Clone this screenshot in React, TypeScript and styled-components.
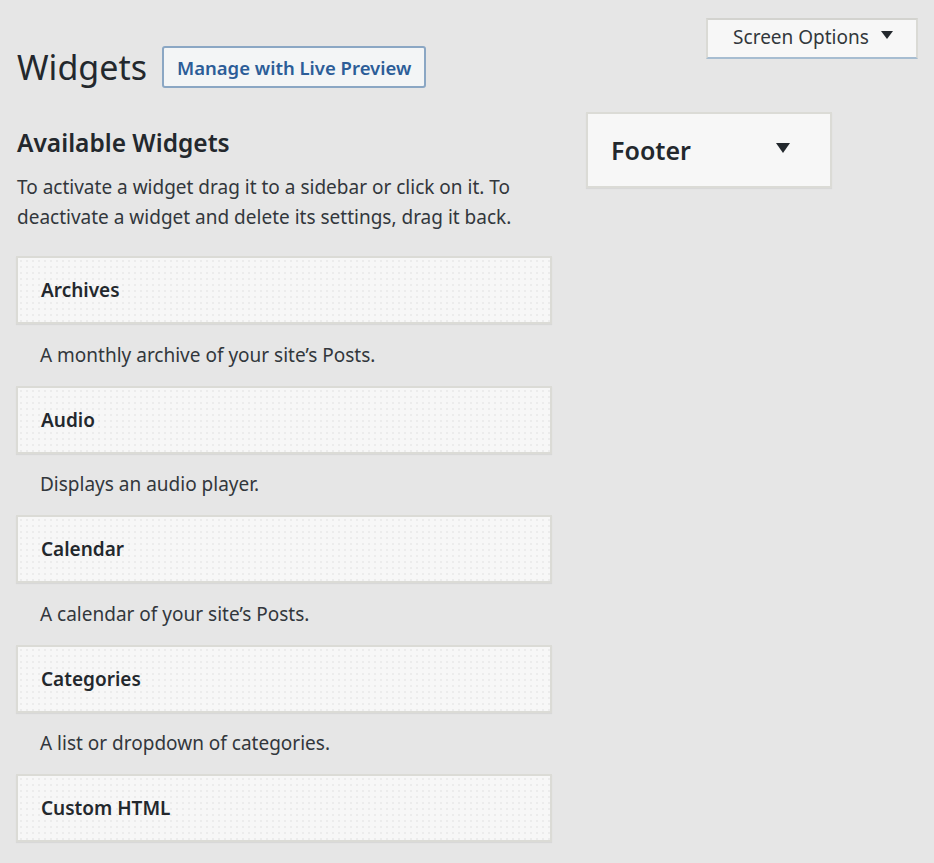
import React from "react";
import styled, { createGlobalStyle } from "styled-components";

const widgets = [
  { title: "Archives", description: "A monthly archive of your site’s Posts." },
  { title: "Audio", description: "Displays an audio player." },
  { title: "Calendar", description: "A calendar of your site’s Posts." },
  { title: "Categories", description: "A list or dropdown of categories." },
  { title: "Custom HTML", description: "" },
];

export default function App() {
  return (
    <>
      <GlobalStyle />
      <S.Page>
        <S.HeaderRow>
          <S.TitleGroup>
            <S.Title>Widgets</S.Title>
            <S.ManageButton>Manage with Live Preview</S.ManageButton>
          </S.TitleGroup>
          <S.ScreenOptions>
            Screen Options <S.Caret $size={6} />
          </S.ScreenOptions>
        </S.HeaderRow>

        <S.Columns>
          <S.LeftColumn>
            <S.SectionTitle>Available Widgets</S.SectionTitle>
            <S.Intro>
              To activate a widget drag it to a sidebar or click on it. To
              deactivate a widget and delete its settings, drag it back.
            </S.Intro>
            <S.WidgetList>
              {widgets.map((w) => (
                <li key={w.title}>
                  <S.WidgetCard>{w.title}</S.WidgetCard>
                  {w.description && <S.WidgetDesc>{w.description}</S.WidgetDesc>}
                </li>
              ))}
            </S.WidgetList>
          </S.LeftColumn>

          <S.SidebarBox>
            Footer
            <S.Caret $size={7} />
          </S.SidebarBox>
        </S.Columns>
      </S.Page>
    </>
  );
}

const GlobalStyle = createGlobalStyle`
  html, body {
    margin: 0;
    padding: 0;
    background: #e6e6e6;
    font-family: "Noto Sans", "Open Sans", sans-serif;
    color: #23282d;
  }
  * { box-sizing: border-box; }
`;

const S = {
  Page: styled.div`
    padding: 18px 16px 0 17px;
    min-height: 863px;
  `,
  HeaderRow: styled.div`
    display: flex;
    justify-content: space-between;
    align-items: flex-start;
  `,
  TitleGroup: styled.div`
    display: flex;
    align-items: center;
    gap: 15px;
    margin-top: 28px;
  `,
  Title: styled.h1`
    margin: 0;
    font-size: 34px;
    font-weight: 400;
    line-height: 42px;
    color: #23282d;
  `,
  ManageButton: styled.button`
    height: 42px;
    padding: 0 13px;
    border: 2px solid #8ba7c4;
    border-radius: 3px;
    background: #f3f5f6;
    color: #2c5d98;
    font-family: inherit;
    font-size: 18.5px;
    font-weight: 600;
    cursor: pointer;
  `,
  ScreenOptions: styled.button`
    width: 212px;
    height: 41px;
    display: flex;
    align-items: center;
    justify-content: center;
    gap: 12px;
    padding: 0 0 3px 2px;
    background: #f7f7f7;
    border: 2px solid #dadad5;
    border-bottom-color: #a7bdd1;
    border-top-color: #d3d3cf;
    color: #32373c;
    font-family: inherit;
    font-size: 19px;
    cursor: pointer;
  `,
  Caret: styled.span<{ $size: number }>`
    display: inline-block;
    width: 0;
    height: 0;
    border-left: ${(p) => p.$size}px solid transparent;
    border-right: ${(p) => p.$size}px solid transparent;
    border-top: ${(p) => Math.round(p.$size * 1.4)}px solid #23282d;
    margin-bottom: 4px;
  `,
  Columns: styled.div`
    display: grid;
    grid-template-columns: 536px 246px;
    column-gap: 34px;
    align-items: start;
    margin-top: 24px;
    margin-left: -1px;
  `,
  LeftColumn: styled.div``,
  SectionTitle: styled.h2`
    margin: 16px 0 0 1px;
    font-size: 24.5px;
    font-weight: 600;
    line-height: 30px;
  `,
  Intro: styled.p`
    margin: 14px 0 24px 1px;
    font-size: 19px;
    line-height: 30px;
    color: #32373c;
  `,
  WidgetList: styled.ul`
    list-style: none;
    margin: 0;
    padding: 0;
  `,
  WidgetCard: styled.div`
    height: 68px;
    display: flex;
    align-items: center;
    padding: 0 23px;
    background-color: #f7f7f7;
    background-image: radial-gradient(#ececec 1px, transparent 1px);
    background-size: 6px 6px;
    border: 2px solid #dbdbd6;
    box-shadow: 0 1px 1px rgba(0, 0, 0, 0.06);
    font-size: 19px;
    font-weight: 600;
    color: #23282d;
  `,
  WidgetDesc: styled.p`
    margin: 0;
    padding: 15.5px 24px 16px;
    font-size: 19px;
    line-height: 30px;
    color: #32373c;
  `,
  SidebarBox: styled.div`
    height: 76px;
    display: flex;
    align-items: center;
    justify-content: space-between;
    padding: 0 40px 0 23px;
    background: #f7f7f7;
    border: 2px solid #dbdbd6;
    box-shadow: 0 1px 1px rgba(0, 0, 0, 0.06);
    font-size: 25px;
    font-weight: 600;
    color: #23282d;
  `,
};
